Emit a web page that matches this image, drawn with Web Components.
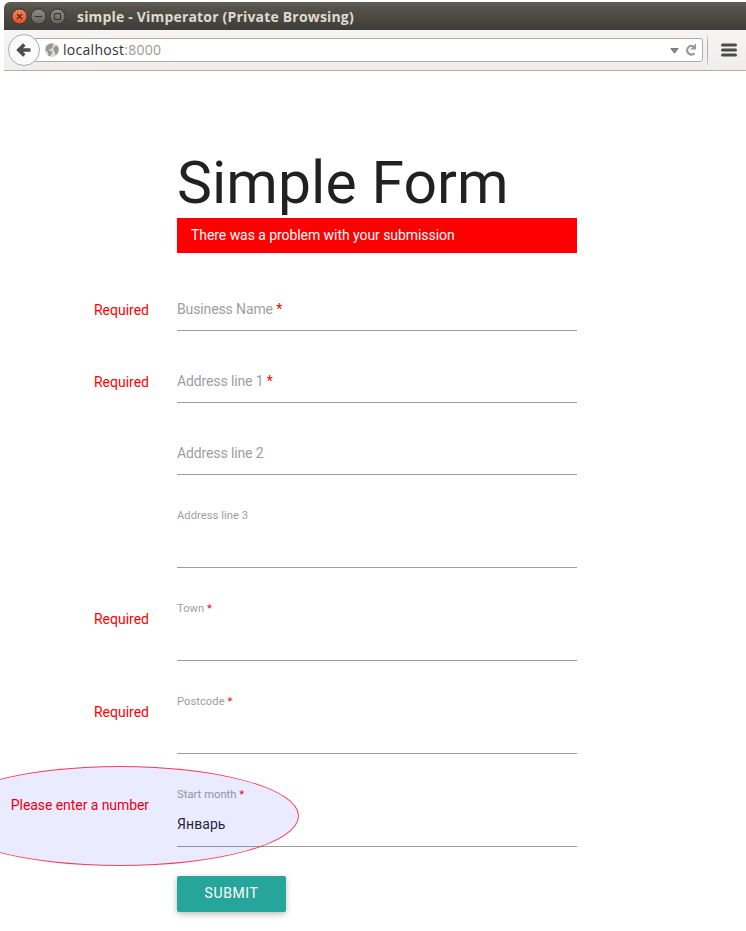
<!DOCTYPE html>
<html lang="en"><head><meta charset="utf-8"><title>simple</title>
<style>
html,body{margin:0;background:#fff}
body{width:746px;height:931px;overflow:hidden;font-family:Roboto,"Liberation Sans",sans-serif;font-size:14px;line-height:20px;color:rgba(0,0,0,.87)}
</style></head><body>
<simple-page></simple-page>
<script>
const define=(name,html)=>customElements.define(name,class extends HTMLElement{
  constructor(){super();const t=document.createElement('template');t.innerHTML=html;
    this.attachShadow({mode:'open'}).append(t.content.cloneNode(true));}
  connectedCallback(){
    for(const k of ['label','error','value']){
      const el=this.shadowRoot.querySelector('.'+k);
      if(el&&this.hasAttribute(k))el.textContent=this.getAttribute(k);
    }
  }
});
define('title-bar',`<style>
:host{display:flex;align-items:center;height:28px;box-sizing:border-box;padding-left:7px;border-radius:6px 0 0 0;background:linear-gradient(#55534a 0,#615e53 1px,#55534b 5px,#3d3c37 28px);color:#dfdbd2}
svg{display:block;flex:none}
span{margin-left:9px;font:bold 14px/20px "Open Sans","Noto Sans",sans-serif;letter-spacing:.18px;white-space:nowrap;position:relative;top:1px}
</style>
<svg width="57" height="20" viewBox="0 0 57 20" fill="none">
<defs><linearGradient id="o" x2="0" y2="1"><stop stop-color="#f58660"/><stop offset="1" stop-color="#df4c1d"/></linearGradient><linearGradient id="g" x2="0" y2="1"><stop stop-color="#8d8b82"/><stop offset="1" stop-color="#64625b"/></linearGradient></defs>
<circle cx="8.5" cy="10.5" r="7.6" fill="url(#o)" stroke="#33322e"/><path d="M6 8l5 5M11 8l-5 5" stroke="#562513" stroke-width="1.2"/>
<circle cx="27.5" cy="10.5" r="7.6" fill="url(#g)" stroke="#33322e"/><path d="M24 10.5h7" stroke="#33322e"/>
<circle cx="46.5" cy="10.5" r="7.6" fill="url(#g)" stroke="#33322e"/><path d="M43.5 7.5h6v6h-6z" stroke="#33322e"/></svg>
<span><slot></slot></span>`);
define('nav-bar',`<style>
:host{display:grid;grid-template-columns:32px 663px 9px 1fr;align-items:center;height:41px;box-sizing:border-box;padding:0 0 1px 4px;background:linear-gradient(#f6f5f4,#efeeec);border-bottom:1px solid #b5aca7}
svg{display:block;flex:none}
.back{position:relative;z-index:1}
.field{display:flex;align-items:center;height:24px;box-sizing:border-box;margin-left:-5px;padding-left:9px;background:#fff;border:1px solid #b0aaa5;border-radius:0 3px 3px 0}
.url{margin-left:4px;flex:1;font:14px/20px "Open Sans","Noto Sans",sans-serif;letter-spacing:.28px;color:#333;white-space:nowrap;padding-top:1px}
.url i{font-style:normal;color:#999}
.sep{justify-self:center;width:1px;height:34px;background:linear-gradient(transparent,#abb3bc 25%,#abb3bc 75%,transparent)}
.menu{margin-left:9px}
</style>
<svg class="back" width="32" height="32" viewBox="0 0 32 32"><circle cx="16" cy="16" r="15.5" fill="#fbfbfb" stroke="#a5adb8"/><path d="M16.3 10.4L10.7 16l5.6 5.6M11.5 16h11" fill="none" stroke="#4b4c4b" stroke-width="3.5"/></svg>
<div class="field">
<svg width="14" height="14" viewBox="0 0 14 14"><circle cx="7" cy="7" r="7" fill="#dcdcdc"/><path d="M1.2 3.2Q3 .5 7 .2l1.6 1.7-1.4 1.4.5 1.2-2 1.7-2-.1.8 1.6 1.8.4 1.2 1.9-1.5 1.5-.6 2-2.2-1L3 9.2.6 7.5Q.2 5 1.2 3.2zM9.7 3.2l2.3-.6q1.8 2 1.7 4.5l-1.2 3.5-2 1.4-.8-3.2-1.5-1.7.4-2z" fill="#979797"/></svg>
<span class="url"><slot name="host"></slot><i><slot name="port"></slot></i></span>
<svg width="32" height="16" viewBox="0 0 32 16"><path d="M.8 6.5h7.4l-3.7 4.7z" fill="#888" stroke="#666" stroke-width=".8"/><path d="M23.2 4.2A4.3 4.3 0 1 0 24.6 11.2" fill="none" stroke="#8c9aaa" stroke-width="2.1"/><path d="M26 1.5v6h-6z" fill="#8c9aaa"/></svg>
</div><div class="sep"></div>
<svg class="menu" width="17" height="14" viewBox="0 0 17 14"><path d="M1.5 2h13M1.5 7h13M1.5 12h13" stroke="#484b4a" stroke-width="3" stroke-linecap="round"/></svg>`);
define('form-row',`<style>
:host{display:grid;grid-template-columns:149px 400px;column-gap:28px;height:72px;line-height:20px}
.error{padding-top:41px;text-align:right;color:#f00;white-space:nowrap}
:host([error^="Please"]) .error{letter-spacing:-.07px}
.box{box-sizing:border-box;border-bottom:1px solid #9e9e9e;padding-top:40px}
.caption{letter-spacing:-.12px}
.label{color:#9e9e9e}
.star{display:none;color:#f00}
:host([required]) .star{display:inline}
.value{margin-top:9px;letter-spacing:.08px}
:host([tall]){height:93px}
:host([tall]) .box{padding-top:31px}
:host([tall]) .caption{font-size:11.2px;letter-spacing:.04px}
</style><div class="error"></div><div class="box"><div class="caption"><span class="label"></span><span class="star"> *</span></div><div class="value"></div></div>`);
define('alert-banner',`<style>:host{display:block;box-sizing:border-box;width:400px;height:35px;padding:7px 14px;background:#f00;color:#fff;letter-spacing:-.06px}</style><slot></slot>`);
define('submit-button',`<style>:host{display:block}button{display:block;width:109px;height:36px;padding:0 0 2px;border:0;border-radius:2px;background:#26a69a;color:#fff;font:14px/34px Roboto,sans-serif;letter-spacing:.6px;box-shadow:0 2px 5px rgba(0,0,0,.16),0 2px 10px rgba(0,0,0,.12)}</style><button><slot></slot></button>`);
define('simple-page',`<style>
:host{display:block;position:relative;width:746px;height:931px;overflow:hidden}
header{padding:2px 0 0 4px}
.intro{padding:78px 0 6px 177px}
h1{margin:0 0 1px;font-size:58.8px;line-height:68px;font-weight:400;letter-spacing:.08px;white-space:nowrap}
submit-button{padding:29px 0 0 177px}
.mark{position:absolute;left:-59px;top:766px;width:358px;height:100px;box-sizing:border-box;border:1px solid rgba(255,0,30,.75);border-radius:50%;background:rgba(0,0,255,.08)}
</style>
<header><title-bar>simple - Vimperator (Private Browsing)</title-bar><nav-bar><span slot="host">localhost</span><span slot="port">:8000</span></nav-bar></header>
<main><div class="intro"><h1>Simple Form</h1><alert-banner>There was a problem with your submission</alert-banner></div>
<form-row label="Business Name" error="Required" required></form-row>
<form-row label="Address line 1" error="Required" required></form-row>
<form-row label="Address line 2"></form-row>
<form-row tall label="Address line 3"></form-row>
<form-row tall label="Town" error="Required" required></form-row>
<form-row tall label="Postcode" error="Required" required></form-row>
<form-row tall label="Start month" error="Please enter a number" value="Январь" required></form-row>
<submit-button>SUBMIT</submit-button></main><div class="mark"></div>`);
</script></body></html>
